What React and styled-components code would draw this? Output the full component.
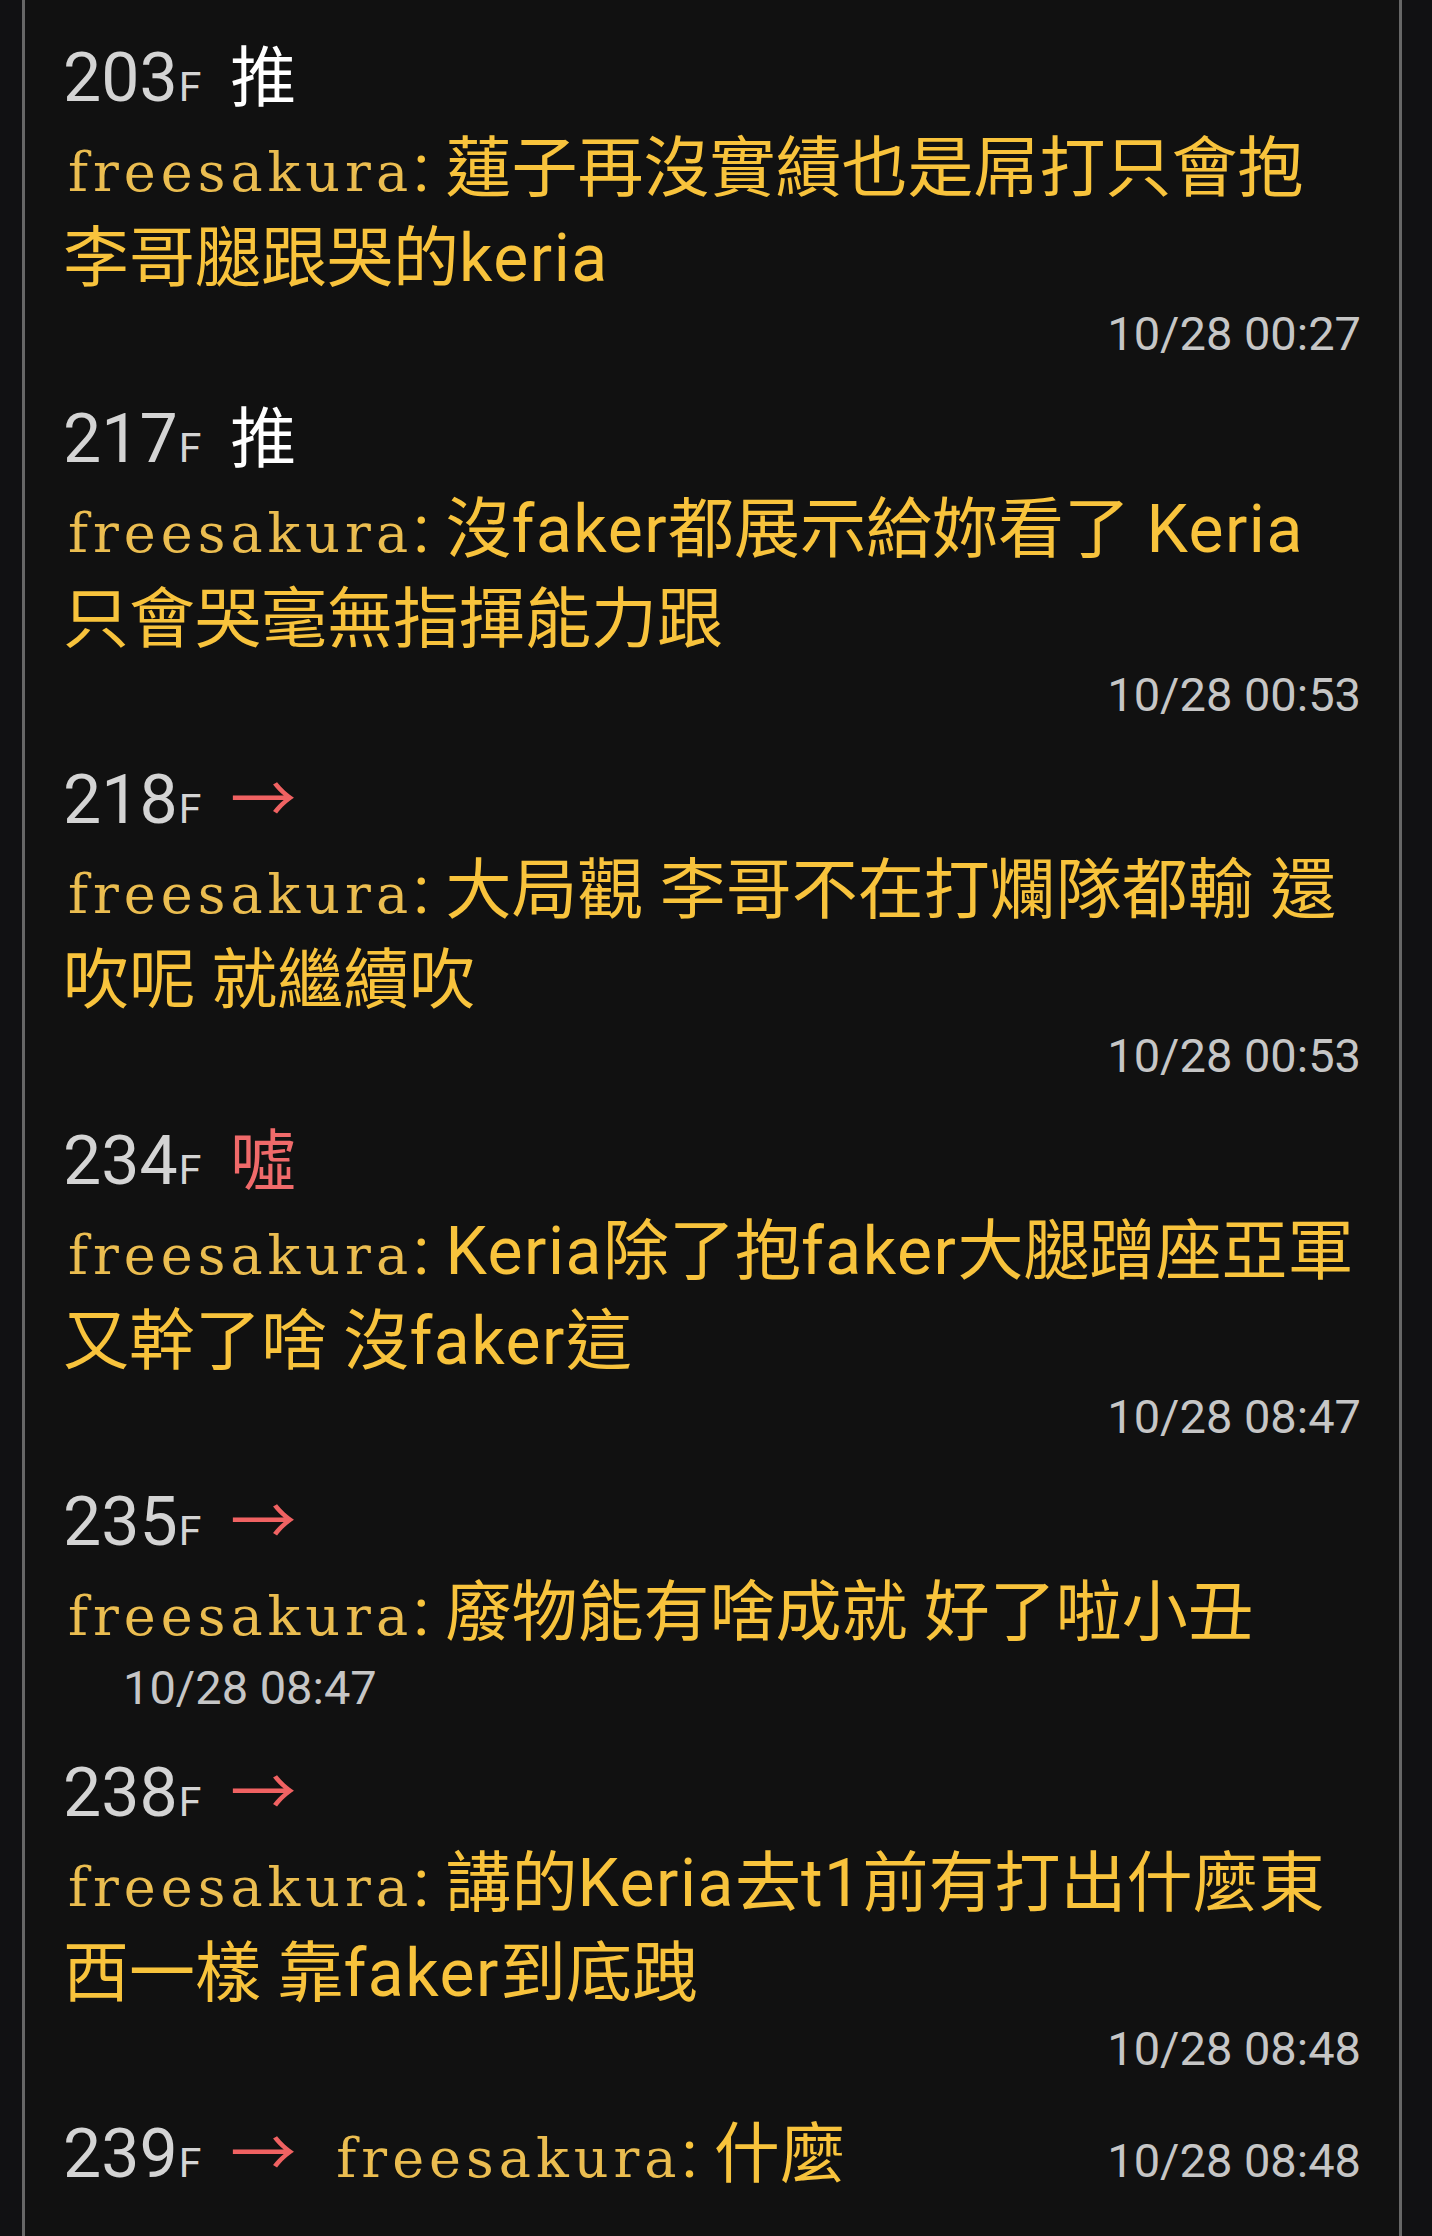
import React from 'react';
import styled, { createGlobalStyle } from 'styled-components';

const GlobalStyle = createGlobalStyle`
  html, body {
    margin: 0;
    padding: 0;
    background: #111113;
  }
  body {
    font-family: Roboto, "Noto Sans CJK TC", sans-serif;
  }
`;

const Thread = styled.div`
  box-sizing: border-box;
  width: 1380px;
  height: 2236px;
  overflow: hidden;
  margin-left: 22px;
  padding: 33px 38px 0;
  border-left: 3px solid #676767;
  border-right: 3px solid #676767;
  background: #111111;
`;

const Comment = styled.div`
  margin-bottom: 30px;
`;

const Header = styled.div`
  display: flex;
  align-items: baseline;
  height: 91px;
  line-height: 91px;
  white-space: nowrap;
`;

const Floor = styled.span`
  font-family: Roboto, sans-serif;
  font-size: 68px;
  color: #d4d4d4;
`;

const FloorMark = styled.span`
  font-size: 41px;
  line-height: 1;
  margin-left: 1px;
`;

const tagColors = {
  push: '#ffffff',
  boo: '#f06a6a',
  arrow: '#f06262',
};

const Tag = styled.span`
  font-family: "Noto Sans CJK TC", sans-serif;
  font-size: 66px;
  line-height: 66px;
  margin-left: 29px;
  color: ${(p) => tagColors[p.$kind]};
`;

const Content = styled.div`
  font-size: 66px;
  line-height: 90px;
  color: #f8c33c;
  white-space: nowrap;
`;

const Latin = styled.span`
  letter-spacing: 1.5px;
`;

const User = styled.span`
  font-family: "DejaVu Serif", serif;
  font-size: 54px;
  line-height: 1;
  letter-spacing: 5px;
  color: #ebbd50;
  margin-left: ${(p) => (p.$inline ? '40px' : '5px')};
`;

const Colon = styled.span`
  font-family: Roboto, sans-serif;
  line-height: 1;
`;

const Time = styled.div`
  font-family: Roboto, sans-serif;
  font-size: 47px;
  line-height: 60px;
  color: #c6c6c6;
  text-align: ${(p) => (p.$wrap ? 'left' : 'right')};
  padding-left: ${(p) => (p.$wrap ? '60px' : '0')};
`;

const InlineText = styled.span`
  font-size: 66px;
  line-height: 1;
  color: #f8c33c;
`;

const InlineTime = styled.span`
  margin-left: auto;
  font-family: Roboto, sans-serif;
  font-size: 47px;
  line-height: 1;
  color: #c6c6c6;
`;

const tagText = { push: '推', boo: '噓', arrow: '→' };

const comments = [
  { floor: 203, tag: 'push', lines: ['蓮子再沒實績也是屌打只會抱', '李哥腿跟哭的keria'], time: '10/28 00:27' },
  { floor: 217, tag: 'push', lines: ['沒faker都展示給妳看了 Keria', '只會哭毫無指揮能力跟'], time: '10/28 00:53' },
  { floor: 218, tag: 'arrow', lines: ['大局觀 李哥不在打爛隊都輸 還', '吹呢 就繼續吹'], time: '10/28 00:53' },
  { floor: 234, tag: 'boo', lines: ['Keria除了抱faker大腿蹭座亞軍', '又幹了啥 沒faker這'], time: '10/28 08:47' },
  { floor: 235, tag: 'arrow', lines: ['廢物能有啥成就 好了啦小丑'], time: '10/28 08:47', wrap: true },
  { floor: 238, tag: 'arrow', lines: ['講的Keria去t1前有打出什麼東', '西一樣 靠faker到底跩'], time: '10/28 08:48' },
];

// latin words sit a little looser than the CJK run around them
function Line({ text }) {
  return text
    .split(/([A-Za-z0-9]+)/)
    .map((part, i) => (/^[A-Za-z0-9]+$/.test(part) ? <Latin key={i}>{part}</Latin> : part));
}

function FloorLabel({ floor, tag }) {
  return (
    <>
      <Floor>
        {floor}
        <FloorMark>F</FloorMark>
      </Floor>
      <Tag $kind={tag}>{tagText[tag]}</Tag>
    </>
  );
}

export default function App() {
  return (
    <>
      <GlobalStyle />
      <Thread>
        {comments.map((c) => (
          <Comment key={c.floor}>
            <Header>
              <FloorLabel floor={c.floor} tag={c.tag} />
            </Header>
            <Content>
              <User>freesakura</User>
              <Colon>:</Colon> <Line text={c.lines[0]} />
              {c.lines.slice(1).map((line) => (
                <React.Fragment key={line}>
                  <br />
                  <Line text={line} />
                </React.Fragment>
              ))}
            </Content>
            <Time $wrap={c.wrap}>{c.time}</Time>
          </Comment>
        ))}
        <Comment>
          <Header>
            <FloorLabel floor={239} tag="arrow" />
            <User $inline>freesakura</User>
            <InlineText>
              <Colon>:</Colon> 什麼
            </InlineText>
            <InlineTime>10/28 08:48</InlineTime>
          </Header>
        </Comment>
      </Thread>
    </>
  );
}
